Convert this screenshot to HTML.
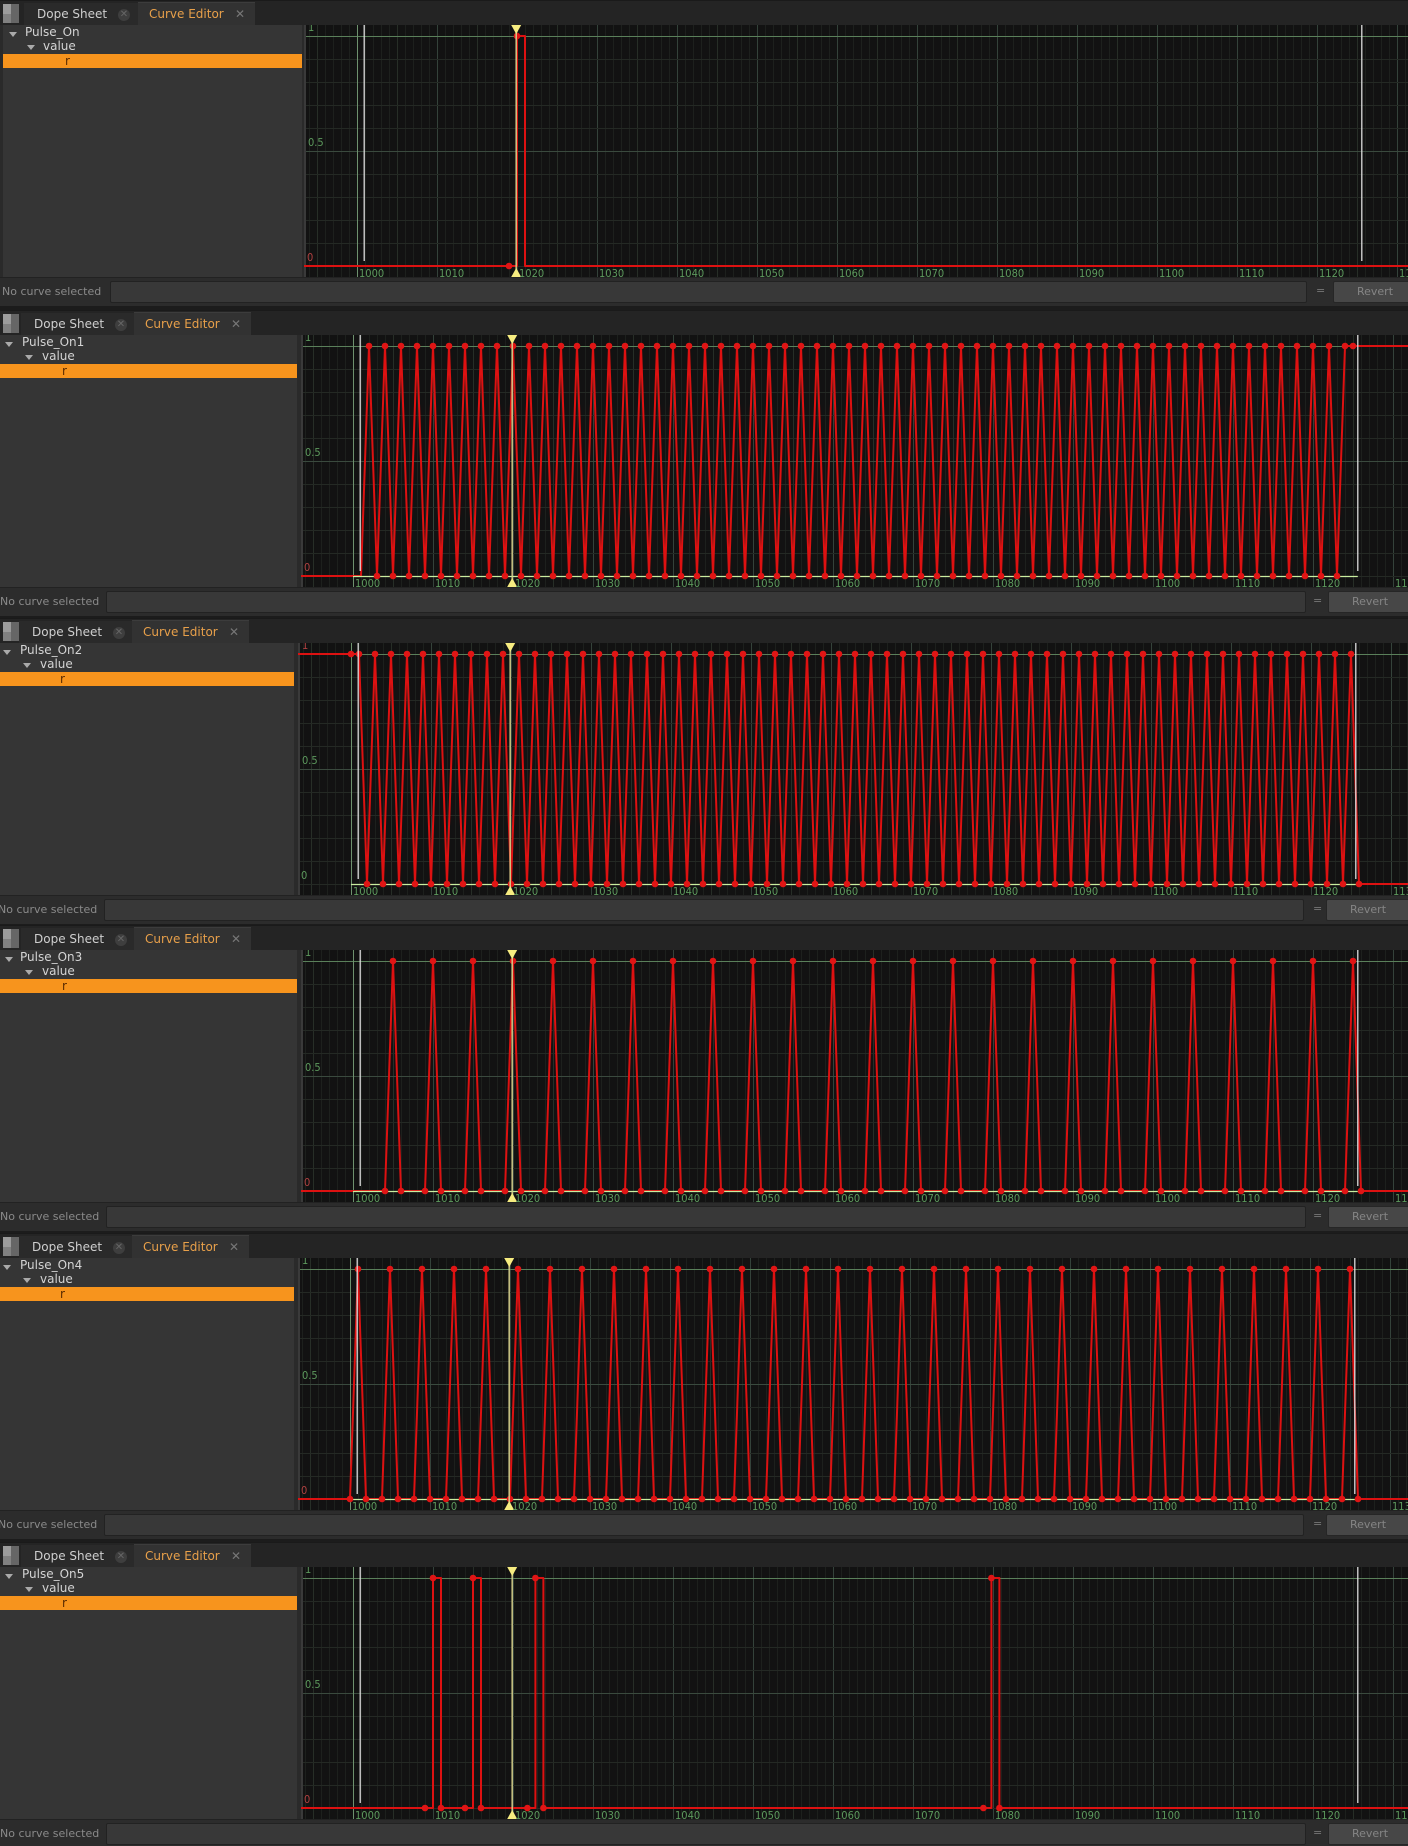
<!DOCTYPE html>
<html><head><meta charset="utf-8">
<style>
*{margin:0;padding:0;box-sizing:border-box}
body{width:1408px;height:1846px;background:#1c1c1c;position:relative;overflow:hidden;font-family:"DejaVu Sans","Liberation Sans",sans-serif;}
.panel{position:absolute;left:0;width:1408px;height:306px;background:#2a2a2a;overflow:hidden}
.tabbar{position:absolute;left:0;top:0;width:1408px;height:25px;background:#242424;border-top:1px solid #1a1a1a}
.icon{position:absolute;left:3px;top:3px;width:16px;height:19px;background:linear-gradient(90deg,#bbb 0 50%,#777 50% 100%);opacity:.8}
.icon:after{content:"";position:absolute;left:0;top:10px;width:8px;height:9px;background:#999}
.tab1{position:absolute;left:21px;top:2px;width:114px;height:23px;background:#2a2a2a;color:#cfcfcf;font-size:12px;line-height:23px;padding-left:13px}
.tab2{position:absolute;left:134px;top:1px;width:117px;height:24px;background:#323232;color:#e8a04a;font-size:12px;line-height:22px;padding-left:11px;border-top:1px solid #3c3c3c}
.cx{position:absolute;left:94px;top:6px;width:12px;height:12px;border-radius:6px;background:#3e3e3e;color:#666;font-size:10px;line-height:12px;text-align:center}
.x{position:absolute;left:97px;top:0;color:#777;font-size:12px}
.tree{position:absolute;top:25px;height:252px;background:#353535;font-size:12px;color:#d4d4d4}
.tree div{position:absolute;white-space:nowrap}
.tri{position:absolute;width:0;height:0;border-left:4px solid transparent;border-right:4px solid transparent;border-top:5px solid #aaa}
.sel{left:0;right:0;top:29px;height:14px;background:#f7941d;color:#5a2a00;padding-left:62px;line-height:14px}
.graph{position:absolute;top:25px;height:252px;right:0;background:#121212;overflow:hidden}
.graph svg{position:absolute;left:0;top:0}
.graph span{position:absolute;font-size:11px;color:#5d9a5d;white-space:nowrap;font-family:"DejaVu Sans Condensed","DejaVu Sans",sans-serif}
.tl{top:242px}
.status{position:absolute;left:0;top:277px;width:1408px;height:29px;background:#2c2c2c;border-top:1px solid #222}
.status .lbl{position:absolute;left:2px;top:7px;font-size:11px;color:#8a8a8a}
.status .inp{position:absolute;left:106px;top:3px;width:1200px;height:22px;background:#383838;border:1px solid #222;border-radius:2px}
.status .eq{position:absolute;left:1313px;top:6px;font-size:11px;color:#777}
.status .rv{position:absolute;left:1328px;top:3px;width:84px;height:22px;background:#474747;border:1px solid #262626;border-radius:2px;color:#858585;font-size:11px;line-height:20px;text-align:center}
</style></head><body>

<!-- Panel 1 -->
<div class="panel" style="top:0">
 <div class="tabbar"><div class="icon"></div><div class="tab1" style="left:24px">Dope Sheet<span class="cx">✕</span></div><div class="tab2" style="left:138px">Curve Editor<span class="x">✕</span></div></div>
 <div class="tree" style="left:3px;width:299px">
  <div class="tri" style="left:6px;top:7px"></div><div style="left:22px;top:0px">Pulse_On</div>
  <div class="tri" style="left:24px;top:20px"></div><div style="left:40px;top:14px">value</div>
  <div class="sel">r</div>
 </div>
 <div class="graph" style="left:304px;width:1104px"><svg id="g0" width="1104" height="252"></svg>
  <span style="left:4px;top:-4px">1</span><span style="left:4px;top:111px">0.5</span><span style="left:3px;top:226px;color:#b04040">0</span>
  <span class="tl" style="left:55px">1000</span><span class="tl" style="left:135px">1010</span><span class="tl" style="left:215px">1020</span><span class="tl" style="left:295px">1030</span><span class="tl" style="left:375px">1040</span><span class="tl" style="left:455px">1050</span><span class="tl" style="left:535px">1060</span><span class="tl" style="left:615px">1070</span><span class="tl" style="left:695px">1080</span><span class="tl" style="left:775px">1090</span><span class="tl" style="left:855px">1100</span><span class="tl" style="left:935px">1110</span><span class="tl" style="left:1015px">1120</span><span class="tl" style="left:1095px">1130</span>
 </div>
 <div class="status"><div class="lbl">No curve selected</div><div class="inp" style="left:110px;width:1197px"></div><div class="eq" style="left:1316px">=</div><div class="rv" style="left:1333px">Revert</div></div>
</div>

<!-- Panel 2 -->
<div class="panel" style="top:310px">
 <div class="tabbar"><div class="icon"></div><div class="tab1">Dope Sheet<span class="cx">✕</span></div><div class="tab2">Curve Editor<span class="x">✕</span></div></div>
 <div class="tree" style="left:0;width:297px">
  <div class="tri" style="left:5px;top:7px"></div><div style="left:22px;top:0px">Pulse_On1</div>
  <div class="tri" style="left:25px;top:20px"></div><div style="left:42px;top:14px">value</div>
  <div class="sel">r</div>
 </div>
 <div class="graph" style="left:301px;width:1107px"><svg id="g1" width="1107" height="252"></svg>
  <span style="left:4px;top:-4px">1</span><span style="left:4px;top:111px">0.5</span><span style="left:3px;top:226px;color:#b04040">0</span>
  <span class="tl" style="left:54px">1000</span><span class="tl" style="left:134px">1010</span><span class="tl" style="left:214px">1020</span><span class="tl" style="left:294px">1030</span><span class="tl" style="left:374px">1040</span><span class="tl" style="left:454px">1050</span><span class="tl" style="left:534px">1060</span><span class="tl" style="left:614px">1070</span><span class="tl" style="left:694px">1080</span><span class="tl" style="left:774px">1090</span><span class="tl" style="left:854px">1100</span><span class="tl" style="left:934px">1110</span><span class="tl" style="left:1014px">1120</span><span class="tl" style="left:1094px">1130</span>
 </div>
 <div class="status"><div class="lbl" style="left:0">No curve selected</div><div class="inp"></div><div class="eq">=</div><div class="rv">Revert</div></div>
</div>

<!-- Panel 3 -->
<div class="panel" style="top:618px">
 <div class="tabbar"><div class="icon"></div><div class="tab1" style="left:19px">Dope Sheet<span class="cx">✕</span></div><div class="tab2" style="left:132px">Curve Editor<span class="x">✕</span></div></div>
 <div class="tree" style="left:0;width:294px">
  <div class="tri" style="left:3px;top:7px"></div><div style="left:20px;top:0px">Pulse_On2</div>
  <div class="tri" style="left:23px;top:20px"></div><div style="left:40px;top:14px">value</div>
  <div class="sel" style="padding-left:60px">r</div>
 </div>
 <div class="graph" style="left:298px;width:1110px"><svg id="g2" width="1110" height="252"></svg>
  <span style="left:4px;top:-4px;color:#b04040">1</span><span style="left:4px;top:111px">0.5</span><span style="left:3px;top:226px">0</span>
  <span class="tl" style="left:55px">1000</span><span class="tl" style="left:135px">1010</span><span class="tl" style="left:215px">1020</span><span class="tl" style="left:295px">1030</span><span class="tl" style="left:375px">1040</span><span class="tl" style="left:455px">1050</span><span class="tl" style="left:535px">1060</span><span class="tl" style="left:615px">1070</span><span class="tl" style="left:695px">1080</span><span class="tl" style="left:775px">1090</span><span class="tl" style="left:855px">1100</span><span class="tl" style="left:935px">1110</span><span class="tl" style="left:1015px">1120</span><span class="tl" style="left:1095px">1130</span>
 </div>
 <div class="status"><div class="lbl" style="left:-2px">No curve selected</div><div class="inp" style="left:104px"></div><div class="eq">=</div><div class="rv" style="left:1326px">Revert</div></div>
</div>

<!-- Panel 4 -->
<div class="panel" style="top:925px">
 <div class="tabbar"><div class="icon"></div><div class="tab1">Dope Sheet<span class="cx">✕</span></div><div class="tab2">Curve Editor<span class="x">✕</span></div></div>
 <div class="tree" style="left:0;width:297px">
  <div class="tri" style="left:5px;top:7px"></div><div style="left:20px;top:0px">Pulse_On3</div>
  <div class="tri" style="left:25px;top:20px"></div><div style="left:42px;top:14px">value</div>
  <div class="sel">r</div>
 </div>
 <div class="graph" style="left:301px;width:1107px"><svg id="g3" width="1107" height="252"></svg>
  <span style="left:4px;top:-4px">1</span><span style="left:4px;top:111px">0.5</span><span style="left:3px;top:226px;color:#b04040">0</span>
  <span class="tl" style="left:54px">1000</span><span class="tl" style="left:134px">1010</span><span class="tl" style="left:214px">1020</span><span class="tl" style="left:294px">1030</span><span class="tl" style="left:374px">1040</span><span class="tl" style="left:454px">1050</span><span class="tl" style="left:534px">1060</span><span class="tl" style="left:614px">1070</span><span class="tl" style="left:694px">1080</span><span class="tl" style="left:774px">1090</span><span class="tl" style="left:854px">1100</span><span class="tl" style="left:934px">1110</span><span class="tl" style="left:1014px">1120</span><span class="tl" style="left:1094px">1130</span>
 </div>
 <div class="status"><div class="lbl" style="left:0">No curve selected</div><div class="inp"></div><div class="eq">=</div><div class="rv">Revert</div></div>
</div>

<!-- Panel 5 -->
<div class="panel" style="top:1233px">
 <div class="tabbar"><div class="icon"></div><div class="tab1" style="left:19px">Dope Sheet<span class="cx">✕</span></div><div class="tab2" style="left:132px">Curve Editor<span class="x">✕</span></div></div>
 <div class="tree" style="left:0;width:294px">
  <div class="tri" style="left:3px;top:7px"></div><div style="left:20px;top:0px">Pulse_On4</div>
  <div class="tri" style="left:23px;top:20px"></div><div style="left:40px;top:14px">value</div>
  <div class="sel" style="padding-left:60px">r</div>
 </div>
 <div class="graph" style="left:298px;width:1110px"><svg id="g4" width="1110" height="252"></svg>
  <span style="left:4px;top:-4px">1</span><span style="left:4px;top:111px">0.5</span><span style="left:3px;top:226px;color:#b04040">0</span>
  <span class="tl" style="left:54px">1000</span><span class="tl" style="left:134px">1010</span><span class="tl" style="left:214px">1020</span><span class="tl" style="left:294px">1030</span><span class="tl" style="left:374px">1040</span><span class="tl" style="left:454px">1050</span><span class="tl" style="left:534px">1060</span><span class="tl" style="left:614px">1070</span><span class="tl" style="left:694px">1080</span><span class="tl" style="left:774px">1090</span><span class="tl" style="left:854px">1100</span><span class="tl" style="left:934px">1110</span><span class="tl" style="left:1014px">1120</span><span class="tl" style="left:1094px">1130</span>
 </div>
 <div class="status"><div class="lbl" style="left:-2px">No curve selected</div><div class="inp" style="left:104px"></div><div class="eq">=</div><div class="rv" style="left:1326px">Revert</div></div>
</div>

<!-- Panel 6 -->
<div class="panel" style="top:1542px;height:304px">
 <div class="tabbar"><div class="icon"></div><div class="tab1">Dope Sheet<span class="cx">✕</span></div><div class="tab2">Curve Editor<span class="x">✕</span></div></div>
 <div class="tree" style="left:0;width:297px">
  <div class="tri" style="left:5px;top:7px"></div><div style="left:22px;top:0px">Pulse_On5</div>
  <div class="tri" style="left:25px;top:20px"></div><div style="left:42px;top:14px">value</div>
  <div class="sel">r</div>
 </div>
 <div class="graph" style="left:301px;width:1107px"><svg id="g5" width="1107" height="252"></svg>
  <span style="left:4px;top:-4px">1</span><span style="left:4px;top:111px">0.5</span><span style="left:3px;top:226px;color:#b04040">0</span>
  <span class="tl" style="left:54px">1000</span><span class="tl" style="left:134px">1010</span><span class="tl" style="left:214px">1020</span><span class="tl" style="left:294px">1030</span><span class="tl" style="left:374px">1040</span><span class="tl" style="left:454px">1050</span><span class="tl" style="left:534px">1060</span><span class="tl" style="left:614px">1070</span><span class="tl" style="left:694px">1080</span><span class="tl" style="left:774px">1090</span><span class="tl" style="left:854px">1100</span><span class="tl" style="left:934px">1110</span><span class="tl" style="left:1014px">1120</span><span class="tl" style="left:1094px">1130</span>
 </div>
 <div class="status"><div class="lbl" style="left:0">No curve selected</div><div class="inp"></div><div class="eq">=</div><div class="rv">Revert</div></div>
</div>

<script>
var NS="http://www.w3.org/2000/svg";
function el(svg,tag,a){var e=document.createElementNS(NS,tag);for(var k in a)e.setAttribute(k,a[k]);svg.appendChild(e);return e;}
var P=[
 {x0:53,zero:false,left:0,right:0},
 {x0:52,zero:true,left:0,right:1},
 {x0:53,zero:true,left:1,right:0},
 {x0:52,zero:true,left:0,right:0},
 {x0:52,zero:true,left:0,right:0},
 {x0:52,zero:false,left:0,right:0}
];
function keys(i){
 var k=[],f;
 if(i==0){k=[[1019,0,1],[1020,0,0],[1020,1,1],[1021,1,0],[1021,0,0]];}
 if(i==1){k.push([1000,0,0]);k.push([1001,0,0]);for(f=1002;f<=1124;f++)k.push([f,f%2==0?1:0,1]);k.push([1125,1,1]);}
 if(i==2){k.push([1000,1,1]);for(f=1001;f<=1125;f++)k.push([f,f%2==1?1:0,1]);k.push([1126,0,1]);}
 if(i==3){for(f=1005;f<=1125;f+=5){k.push([f-1,0,1]);k.push([f,1,1]);k.push([f+1,0,1]);}}
 if(i==4){for(f=1001;f<=1125;f+=4){k.push([f-1,0,1]);k.push([f,1,1]);k.push([f+1,0,1]);}}
 if(i==5){[1009,1014,1021.8,1078.8].forEach(function(a){k.push([a,0,1]);k.push([a+1,0,0]);k.push([a+1,1,1]);k.push([a+2,1,0]);k.push([a+2,0,1]);});}
 return k;
}
P.forEach(function(p,i){
 var s=document.getElementById("g"+i),W=+s.getAttribute("width"),H=252;
 var X=function(f){return p.x0+(f-1000)*8;},Y=function(v){return 241-v*230;};
 for(var f=993;f<=1140;f++){var x=X(f)+.5;var c=f%10==0?"#34423a":(f%5==0?"#272e27":"#1d201d");el(s,"line",{x1:x,y1:0,x2:x,y2:H,stroke:c,"stroke-width":1});}
 for(var j=-1;j<=10;j++){var y=Math.round(Y(j/10))+.5;var c=j==5?"#3a4a3e":(j==10?"#5a805a":"#242924");el(s,"line",{x1:0,y1:y,x2:W,y2:y,stroke:c,"stroke-width":1});}
 el(s,"line",{x1:X(1000)+.5,y1:0,x2:X(1000)+.5,y2:H,stroke:"#6e916e","stroke-width":1});
 el(s,"line",{x1:1,y1:0,x2:1,y2:H,stroke:"#3a3a3a","stroke-width":2});
 var k=keys(i),d="M0 "+Y(p.left);
 k.forEach(function(q){d+=" L"+X(q[0]).toFixed(1)+" "+Y(q[1]);});
 var last=k[k.length-1];d+=" L"+W+" "+Y(i==1?1:last[1]);
 el(s,"path",{d:d,fill:"none",stroke:"#dd1111","stroke-width":2,"stroke-linejoin":"round"});
 if(p.zero)el(s,"line",{x1:X(1000),y1:241.5,x2:X(1125.6),y2:241.5,stroke:"#c9eea0","stroke-width":1.2});
 k.forEach(function(q){if(q[2])el(s,"circle",{cx:X(q[0]),cy:Y(q[1]),r:3.3,fill:"#e01515"});});
 [1000.9,1125.6].forEach(function(f){el(s,"line",{x1:X(f),y1:0,x2:X(f),y2:236,stroke:"#dcdcdc","stroke-width":1.3});});
 var px=X(1019.9);
 el(s,"line",{x1:px,y1:0,x2:px,y2:H,stroke:"#d6d08c","stroke-width":1.6,"stroke-opacity":0.9});
 el(s,"path",{d:"M"+(px-5)+" 0 L"+(px+5)+" 0 L"+px+" 9Z",fill:"#f6ec80"});
 el(s,"path",{d:"M"+(px-5)+" "+H+" L"+(px+5)+" "+H+" L"+px+" "+(H-9)+"Z",fill:"#f6ec80"});
});
</script>
</body></html>
